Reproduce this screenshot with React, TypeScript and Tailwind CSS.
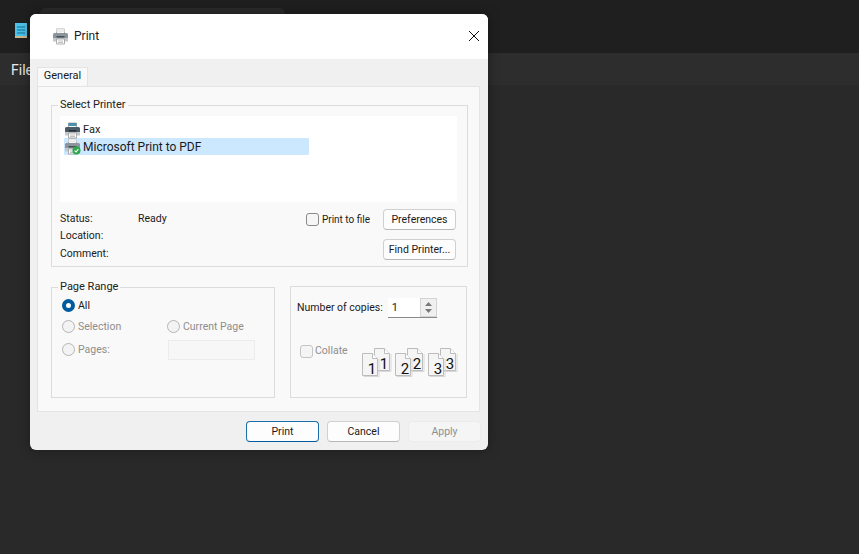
import type { ReactNode } from "react"

function PrinterIcon({ check, dark }: { check?: boolean; dark?: boolean }) {
  return (
    <svg width="17" height="17" viewBox="0 0 17 17" className="shrink-0">
      <path d="M4.500 1h8v5h-8z" fill="#f4f4f4" stroke="#9a9a9a" strokeWidth="0.8" />
      <path d="M4.500 1h8v3h-8z" fill={dark ? "#4a8fb0" : "#ececec"} />
      <path d="M1 6.500a1.500 1.500 0 0 1 1.500-1.500h12a1.500 1.500 0 0 1 1.500 1.500V12H1z" fill={dark ? "#4a5a66" : "#8c959c"} />
      <path d="M1 10h15v3.500H1z" fill="#c3c8cc" />
      <path d="M4.500 8h8v1.500h-8z" fill={dark ? "#2b3338" : "#4a5258"} />
      <path d="M4.500 11h8v5h-8z" fill="#ffffff" stroke="#9a9a9a" strokeWidth="0.8" />
      <path d="M6 13h5M6 14.500h5" stroke="#a8a8a8" strokeWidth="0.7" />
      {check && (
        <g>
          <circle cx="12.500" cy="12.500" r="4" fill="#2ea84a" />
          <path d="M10.600 12.600l1.400 1.400 2.400-2.800" fill="none" stroke="#ffffff" strokeWidth="1.100" />
        </g>
      )}
    </svg>
  )
}

function Sheet({ n }: { n: number }) {
  return (
    <svg width="18" height="24" viewBox="0 0 18 24" className="block">
      <path d="M0.500 0.500h10l5 5v17h-15z" fill="#f5f5f5" stroke="#bcbcbc" />
      <path d="M10.500 0.500v5h5" fill="#ffffff" stroke="#bcbcbc" />
      <path d="M1.500 23.500h15.500V6" fill="none" stroke="#d8d8d8" />
      <text x="10" y="21" fontSize="15" textAnchor="middle" fill="#111111" fontFamily="Roboto, sans-serif">
        {n}
      </text>
    </svg>
  )
}

function CollatePair({ n }: { n: number }) {
  return (
    <div className="relative w-[29px] h-[28px]">
      <div className="absolute left-[12px] top-0"><Sheet n={n} /></div>
      <div className="absolute left-0 top-[5px]"><Sheet n={n} /></div>
    </div>
  )
}

function Group({ title, className, inner, children }: { title?: string; className: string; inner: string; children: ReactNode }) {
  return (
    <fieldset className={`border border-[#dcdcdc] min-w-0 ${className}`}>
      {title && <legend className="ml-[6px] px-[2px] text-[11px] leading-[14px] text-[#222]">{title}</legend>}
      <div className={inner}>{children}</div>
    </fieldset>
  )
}

function Radio({ label, checked, disabled }: { label: string; checked?: boolean; disabled?: boolean }) {
  return (
    <div className={`flex items-center gap-[3px] ${disabled ? "text-[#8e8e8e]" : "text-[#1a1a1a]"}`}>
      {checked ? (
        <span className="w-[13px] h-[13px] rounded-full border-[4px] border-[#005a9e] bg-white" />
      ) : (
        <span className="w-[13px] h-[13px] rounded-full border border-[#b5b5b5] bg-[#f3f3f3]" />
      )}
      <span>{label}</span>
    </div>
  )
}

function Btn({ label, primary, disabled }: { label: string; primary?: boolean; disabled?: boolean }) {
  let cls = "border-[#d0d0d0] border-b-[#b8b8b8] bg-[#fdfdfd] text-[#1a1a1a]"
  if (primary) cls = "border-[#1b6fa8] border-b-[#005a9e] bg-[#fdfdfd] text-[#1a1a1a]"
  if (disabled) cls = "border-[#ececec] bg-[#f5f5f5] text-[#8f8f8f]"
  return (
    <button className={`w-[73px] h-[21px] pt-[1px] rounded-[4px] border text-[10.500px] leading-none ${cls}`}>{label}</button>
  )
}

export default function App() {
  return (
    <div className="relative w-[859px] h-[554px] overflow-hidden bg-[#292929] font-['Roboto',sans-serif] text-[10.500px]">
      {/* notepad behind the dialog */}
      <div className="absolute left-[40px] top-[8px] w-[245px] h-[8px] rounded-t-[6px] bg-[#2a2a2a]" />
      <div className="h-[53px] bg-[#1f1f1f] flex items-start pt-[22px] pl-[14px]">
        <svg width="14" height="17" viewBox="0 0 14 17">
          <path d="M1 1h12v15H1z" fill="#4cc2e8" />
          <path d="M1 14h12v2H1z" fill="#c9b98f" />
          <path d="M3 5h8M3 8h8M3 11h8" stroke="#0f6f94" strokeWidth="1" />
        </svg>
      </div>
      <div className="h-[32px] bg-[#2d2d2d] flex items-center pl-[11px] pt-[2px] text-[14px] text-[#e8e8e8]">File</div>

      {/* print dialog */}
      <div className="absolute left-[30px] top-[14px] w-[458px] h-[436px] rounded-[6px] overflow-hidden bg-[#f0f0f0] flex flex-col text-[#1a1a1a] shadow-[0_0_12px_rgba(0,0,0,0.35)]">
        <div className="h-[45px] bg-white flex items-center pl-[22px] pr-[9px] pb-[1px] shrink-0">
          <PrinterIcon />
          <span className="ml-[5px] text-[12px]">Print</span>
          <svg width="12" height="12" viewBox="0 0 12 12" className="ml-auto mr-[-1px]">
            <path d="M1 1l10 10M11 1L1 11" stroke="#111111" strokeWidth="1" />
          </svg>
        </div>

        <div className="pl-[7px] pr-[8px] pt-[8px] flex-1 flex flex-col">
          <div className="w-[51px] h-[20px] pb-[2px] bg-[#f9f9f9] border border-b-0 border-[#e4e4e4] flex items-center justify-center text-[11px]">General</div>
          <div className="h-[326px] bg-[#f9f9f9] border border-[#e4e4e4] pl-[13px] pr-[11px] flex flex-col mt-[-1px]">
            <Group title="Select Printer" className="h-[169px] mt-[11px]" inner="px-[8px] pb-[5px]">
              <div className="h-[86px] bg-white mt-[4px] pl-[4px] pt-[6px] mr-[2px]">
                <div className="flex items-center h-[16px] gap-[2px] text-[11px]"><PrinterIcon dark /><span>Fax</span></div>
                <div className="flex items-center h-[17px] w-[245px] gap-[2px] bg-[#cce8ff] rounded-[1px] text-[12px]"><PrinterIcon check /><span>Microsoft Print to PDF</span></div>
              </div>
              <div className="flex mt-[8px]">
                <div className="grid grid-cols-[78px_auto] auto-rows-[17.500px] items-center h-[53px]">
                  <span>Status:</span><span>Ready</span>
                  <span>Location:</span><span />
                  <span>Comment:</span><span />
                </div>
                <div className="ml-auto mr-[3px] mt-[-1px] flex flex-col gap-[9px] items-end">
                  <div className="flex items-center">
                    <span className="w-[13px] h-[13px] rounded-[3px] border border-[#8a8a8a] bg-[#f6f6f6] mr-[3px]" />
                    <span className="mr-[13px] text-[10px]">Print to file</span>
                    <Btn label="Preferences" />
                  </div>
                  <Btn label="Find Printer..." />
                </div>
              </div>
            </Group>

            <div className="flex gap-[15px] mt-[13px]">
              <Group title="Page Range" className="w-[224px] h-[118px]" inner="px-[10px] pt-[4px]">
                <Radio label="All" checked />
                <div className="flex mt-[6px] h-[14px] items-center">
                  <div className="w-[105px]"><Radio label="Selection" disabled /></div>
                  <Radio label="Current Page" disabled />
                </div>
                <div className="flex mt-[6px] items-center">
                  <div className="w-[106px]"><Radio label="Pages:" disabled /></div>
                  <div className="w-[87px] h-[20px] border border-[#ececec] bg-[#f7f7f7]" />
                </div>
              </Group>

              <Group className="w-[177px] h-[112px] mt-[6px]" inner="pl-[6px]">
                <div className="flex items-center mt-[11px]">
                  <span>Number of copies:</span>
                  <div className="ml-[5px] w-[49px] h-[20px] border-b border-[#8a8a8a] bg-white flex">
                    <span className="flex-1 pl-[4px] leading-[20px] text-[11px]">1</span>
                    <div className="w-[17px] border border-[#d4d4d4] bg-[#f0f0f0] flex flex-col items-center justify-center gap-[3px]">
                      <svg width="7" height="4" viewBox="0 0 7 4"><path d="M3.500 0L7 4H0z" fill="#7a7a7a" /></svg>
                      <svg width="7" height="4" viewBox="0 0 7 4"><path d="M0 0h7L3.500 4z" fill="#7a7a7a" /></svg>
                    </div>
                  </div>
                </div>
                <div className="flex items-start mt-[26px]">
                  <div className="flex items-center h-[14px] pl-[3px] text-[#8e8e8e]">
                    <span className="w-[13px] h-[13px] rounded-[3px] border border-[#c4c4c4] bg-[#f4f4f4] mr-[2px]" />
                    <span>Collate</span>
                  </div>
                  <div className="flex gap-[4px] ml-auto mr-[9px] mt-[4px]">
                    <CollatePair n={1} />
                    <CollatePair n={2} />
                    <CollatePair n={3} />
                  </div>
                </div>
              </Group>
            </div>
          </div>

          <div className="flex justify-end gap-[8px] mt-[9px] mr-[-1px]">
            <Btn label="Print" primary />
            <Btn label="Cancel" />
            <Btn label="Apply" disabled />
          </div>
        </div>
      </div>
    </div>
  )
}
